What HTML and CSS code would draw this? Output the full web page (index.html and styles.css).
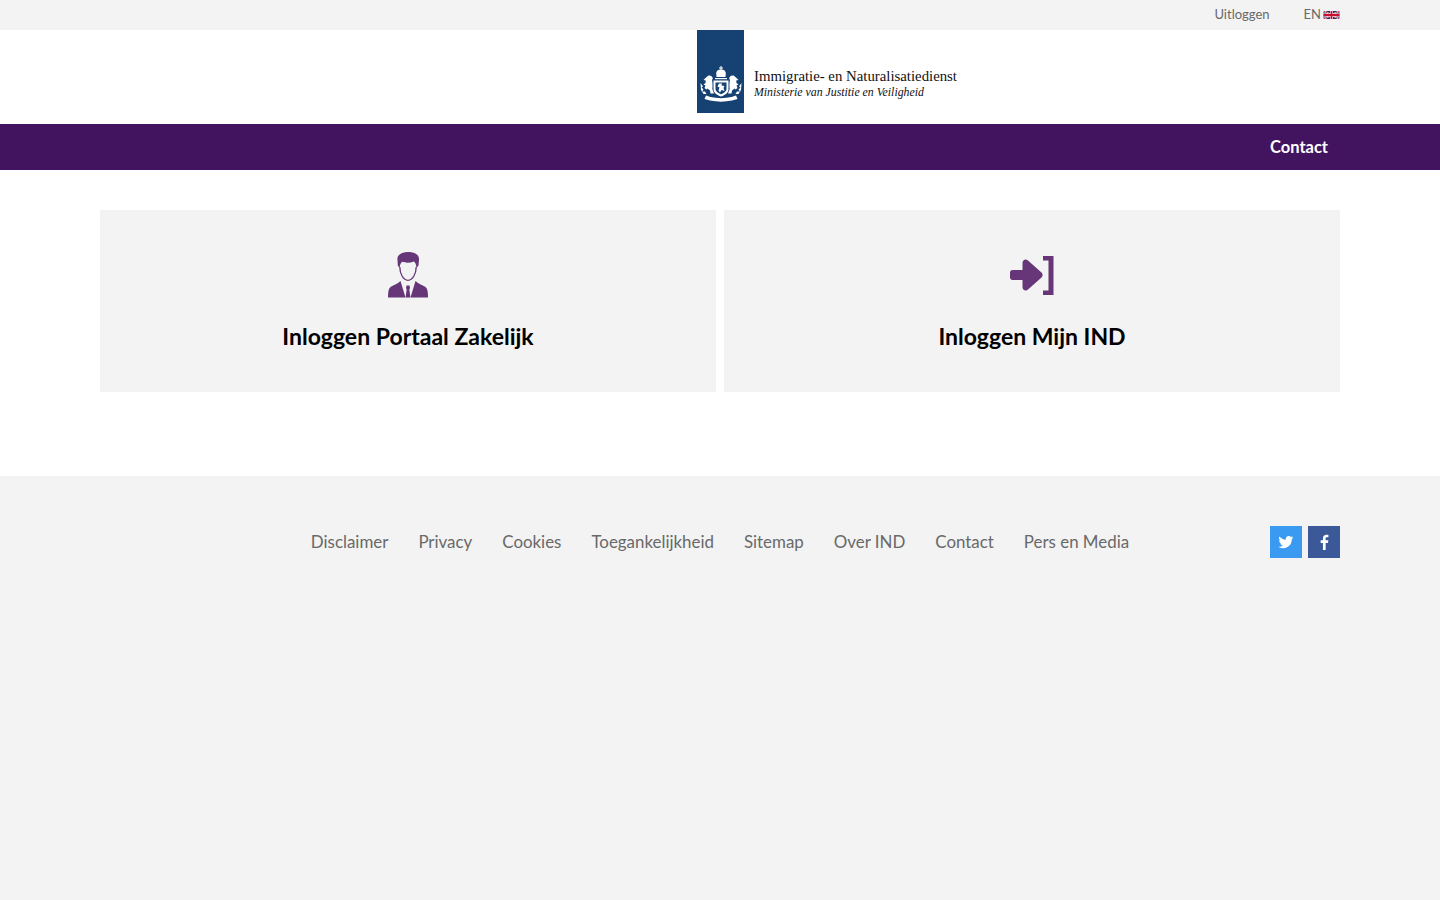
FILE: index.html
```html
<!DOCTYPE html>
<html lang="nl">
<head>
<meta charset="utf-8">
<title>IND</title>
<link rel="stylesheet" href="styles.css">
</head>
<body>
<div class="topbar">
  <div class="wrap topbar-inner">
    <a class="top-link" href="#">Uitloggen</a>
    <a class="top-link lang" href="#">EN
      <svg class="flag" viewBox="0 0 60 30" width="17" height="8"><rect width="60" height="30" fill="#2b2a6b"/><path d="M0 0L60 30M60 0L0 30" stroke="#fff" stroke-width="6"/><path d="M0 0L60 30M60 0L0 30" stroke="#c8102e" stroke-width="3"/><path d="M30 0V30M0 15H60" stroke="#fff" stroke-width="11"/><path d="M30 0V30M0 15H60" stroke="#c8102e" stroke-width="7"/></svg>
    </a>
  </div>
</div>
<header class="header">
  <a class="logo" href="#">
    <span class="logo-band">
      <svg class="crest" viewBox="0 0 42 36" width="42" height="36" fill="#fff">
        <path d="M20.500 0H21.500V1.500H23V2.500H21.500V3.500C23.500 3.500 25.500 4.500 25.800 7L25.500 11H16.500L16.200 7C16.500 4.500 18.500 3.500 20.500 3.500V2.500H19V1.500H20.500Z"/>
        <path d="M15 12H27V13.200H15Z"/>
        <path d="M13.500 14.500H28.500V23C28.500 27 25 29 21 30.500C17 29 13.500 27 13.500 23Z"/>
        <path d="M15.500 16.500H26.500V23C26.500 25.500 24 27 21 28.200C18 27 15.500 25.500 15.500 23Z" fill="#154273"/>
        <path d="M19 17.500H22L21.500 19.500L24.500 20L23.500 22L24.500 25L21.500 24L20 26.500L18.500 24.500L19.500 21.500L17.500 20.500Z"/>
        <path d="M8.500 9.500C10.500 9 12.500 10 12.800 12.500L12 14C12.500 16 12.800 20 12.300 23L14 27.500H10.500L10 24.500L7.500 22.500L6.500 23.500L4.500 22L5.500 19.500L3.500 18.500L5.500 17L5.800 14.500L3.500 14L6 11.500Z"/>
        <path d="M33.500 9.500C31.500 9 29.500 10 29.200 12.500L30 14C29.500 16 29.200 20 29.700 23L28 27.500H31.500L32 24.500L34.500 22.500L35.500 23.500L37.500 22L36.500 19.500L38.500 18.500L36.500 17L36.200 14.500L38.500 14L36 11.500Z"/>
        <path d="M0.500 17L3 20.500L1.500 21.500L3.500 23.500L2 25.500L5 25.500L6.500 28H3.500L1 24Z"/>
        <path d="M41.500 17L39 20.500L40.500 21.500L38.500 23.500L40 25.500L37 25.500L35.500 28H38.500L41 24Z"/>
        <path d="M6 29.500L10.500 31C17 32.500 25 32.500 31.500 31L36 29.500L37.500 33L32 34.500C25 36 17 36 10 34.500L4.500 33Z"/>
      </svg>
    </span>
    <span class="logo-text">
      <span class="logo-title">Immigratie- en Naturalisatiedienst</span>
      <span class="logo-sub">Ministerie van Justitie en Veiligheid</span>
    </span>
  </a>
</header>
<nav class="nav">
  <div class="wrap nav-inner"><a class="nav-link" href="#">Contact</a></div>
</nav>
<main class="wrap cards">
  <a class="card" href="#">
    <svg class="card-icon" viewBox="0 0 42 48" width="42" height="48" fill="#663678">
      <path d="M10.500 9C9.500 4 15 1 21 1C27 1 32.500 3 32 9L31.500 14.500L29.500 17C29.300 13.500 28.200 11.500 27 10.500C23 12 18 12 15 10.800C14 11.800 12.900 13.500 12.500 17L10.800 14.500Z"/>
      <path d="M12.800 16C12.800 23 16.500 29.300 21 29.300C25.500 29.300 29.200 23 29.200 16" fill="none" stroke="#663678" stroke-width="1.300"/>
      <path d="M13.500 30L18.500 46.500H1C1 41 1.500 37.500 3.500 36C6 34.500 10.500 33 13.500 30Z"/>
      <path d="M28.500 30L23.500 46.500H41C41 41 40.500 37.500 38.500 36C36 34.500 31.500 33 28.500 30Z"/>
      <path d="M19.500 34.500H22.500L23 37L22.300 38.500L23.500 46.500H18.500L19.700 38.500L19 37Z"/>
    </svg>
    <h2 class="card-title">Inloggen Portaal Zakelijk</h2>
  </a>
  <a class="card" href="#">
    <svg class="card-icon" viewBox="0 0 44 40" width="44" height="48" fill="#663678">
      <path d="M2.500 15H12.500V8C12.500 5 15.500 3.500 18 5.500L31.500 17.500C33 19 33 21 31.500 22.500L18 34.500C15.500 36.500 12.500 35 12.500 32V25H2.500C1 25 0 24 0 22.500V17.500C0 16 1 15 2.500 15Z"/>
      <path d="M33 1H43.500V40H33V35.500H38.500V5.500H33Z"/>
    </svg>
    <h2 class="card-title">Inloggen Mijn IND</h2>
  </a>
</main>
<footer class="footer">
  <div class="wrap footer-inner">
    <span></span>
    <ul class="footer-links">
      <li><a href="#">Disclaimer</a></li>
      <li><a href="#">Privacy</a></li>
      <li><a href="#">Cookies</a></li>
      <li><a href="#">Toegankelijkheid</a></li>
      <li><a href="#">Sitemap</a></li>
      <li><a href="#">Over IND</a></li>
      <li><a href="#">Contact</a></li>
      <li><a href="#">Pers en Media</a></li>
    </ul>
    <div class="social">
      <a class="social-btn twitter" href="#" aria-label="Twitter">
        <svg viewBox="0 0 24 24" width="16" height="16" fill="#fff"><path d="M23 5.100c-.8.400-1.700.600-2.600.700.900-.600 1.700-1.400 2-2.500-.9.500-1.900.900-2.900 1.100A4.600 4.600 0 0 0 11.700 8.600C7.900 8.400 4.500 6.600 2.200 3.800c-1.200 2.100-.6 4.800 1.400 6.100-.7 0-1.400-.2-2.100-.6 0 2.200 1.600 4.100 3.700 4.600-.7.200-1.400.2-2.100.1.600 1.900 2.300 3.200 4.300 3.200A9.300 9.300 0 0 1 .6 19.100 13 13 0 0 0 20.700 7.500c.9-.6 1.700-1.400 2.300-2.400Z"/></svg>
      </a>
      <a class="social-btn facebook" href="#" aria-label="Facebook">
        <svg viewBox="0 0 24 24" width="16" height="16" fill="#fff"><path d="M14.500 24V13.500H18l.5-4h-4V7c0-1.200.4-2 2-2h2.100V1.300C18.200 1.200 17 1 15.600 1 12.600 1 10.400 2.900 10.400 6.500v3H7v4h3.400V24Z"/></svg>
      </a>
    </div>
  </div>
</footer>
</body>
</html>
```
FILE: styles.css
```css
* { box-sizing: border-box; }
html, body { height: 100%; }
body {
  margin: 0;
  display: flex;
  flex-direction: column;
  font-family: Lato, "Noto Sans", sans-serif;
  background: #fff;
}
a { text-decoration: none; color: inherit; }
.wrap { width: 1240px; margin: 0 auto; }

.topbar { background: #f3f3f3; height: 30px; }
.topbar-inner {
  display: flex;
  justify-content: flex-end;
  align-items: center;
  gap: 34px;
  height: 28px;
}
.top-link { font-size: 13px; color: #696969; }
.lang { display: flex; align-items: center; gap: 2px; }
.flag { display: block; margin-top: 1px; }

.header { height: 94px; padding-left: 697px; }
.logo { display: inline-flex; align-items: flex-start; height: 83px; }
.logo-band {
  width: 47px;
  height: 83px;
  background: #154273;
  display: flex;
  justify-content: center;
  align-items: flex-end;
  padding-bottom: 11px;
}
.crest { display: block; }
.logo-text {
  display: flex;
  flex-direction: column;
  margin-left: 10px;
  padding-top: 38px;
  font-family: "Liberation Serif", serif;
  color: #111;
  white-space: nowrap;
}
.logo-title { font-size: 14.800px; line-height: 16px; }
.logo-sub {
  font-size: 13.500px;
  line-height: 16px;
  font-style: italic;
  transform: scaleX(0.875);
  transform-origin: left center;
}

.nav { background: #42145f; height: 46px; }
.nav-inner { display: flex; justify-content: flex-end; align-items: center; height: 45px; padding-right: 12px; }
.nav-link { color: #fff; font-weight: 700; font-size: 16.500px; }

.cards {
  display: grid;
  grid-template-columns: 1fr 1fr;
  gap: 8px;
  padding-top: 40px;
  height: 306px;
  align-content: start;
}
.card {
  background: #f3f3f3;
  height: 182px;
  display: flex;
  flex-direction: column;
  align-items: center;
  padding-top: 41px;
}
.card-icon { display: block; height: 48px; }
.card-title {
  margin: 22px 0 0;
  font-size: 23px;
  line-height: 30px;
  font-weight: 700;
  color: #000;
}

.footer { flex: 1; background: #f3f3f3; padding-top: 50px; }
.footer-inner {
  display: grid;
  grid-template-columns: 1fr auto 1fr;
  align-items: center;
}
.footer-links {
  display: flex;
  gap: 30px;
  margin: 0;
  padding: 0 0 2px;
  list-style: none;
  font-size: 16.900px;
  color: #696969;
}
.social { display: flex; gap: 6px; justify-content: flex-end; }
.social-btn {
  width: 32px;
  height: 32px;
  display: flex;
  align-items: center;
  justify-content: center;
}
.twitter { background: #3a99f0; }
.facebook { background: #3b5998; }
```
